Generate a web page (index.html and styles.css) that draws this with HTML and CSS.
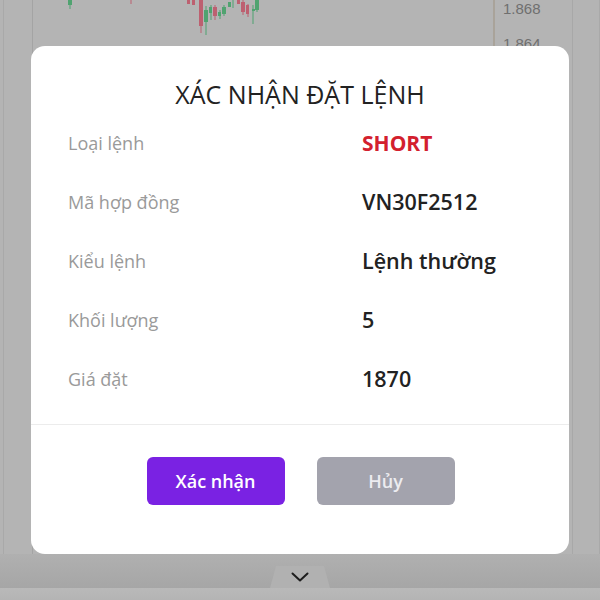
FILE: index.html
```html
<!DOCTYPE html>
<html lang="vi">
<head>
    <meta charset="UTF-8">
    <title>Xác nhận đặt lệnh</title>
    <link rel="stylesheet" href="styles.css">
</head>
<body>
    <div class="screen">
        <div class="chart">
            <div class="plot">
                <svg class="candles" width="460" height="50" viewBox="0 0 460 50">
                    <line x1="37" y1="0" x2="37" y2="9" stroke="#2f9e5a" stroke-width="1"/>
                    <rect x="35" y="0" width="4" height="5" fill="#2f9e5a"/>
                    <line x1="98" y1="0" x2="98" y2="4" stroke="#c0455a" stroke-width="1"/>
                    <rect x="154" y="0" width="3" height="4" fill="#c0455a"/>
                    <rect x="159" y="0" width="3" height="5" fill="#c0455a"/>
                    <line x1="168" y1="0" x2="168" y2="33" stroke="#c0455a" stroke-width="1"/>
                    <rect x="166" y="0" width="4" height="26" fill="#c0455a"/>
                    <line x1="173" y1="6" x2="173" y2="35" stroke="#2f9e5a" stroke-width="1"/>
                    <rect x="171" y="10" width="4" height="12" fill="#2f9e5a"/>
                    <line x1="178" y1="5" x2="178" y2="20" stroke="#2f9e5a" stroke-width="1"/>
                    <rect x="176" y="7" width="3" height="6" fill="#2f9e5a"/>
                    <line x1="182" y1="5" x2="182" y2="20" stroke="#c0455a" stroke-width="1"/>
                    <rect x="180" y="7" width="4" height="9" fill="#c0455a"/>
                    <line x1="187" y1="10" x2="187" y2="19" stroke="#2f9e5a" stroke-width="1"/>
                    <rect x="185" y="12" width="3" height="4" fill="#2f9e5a"/>
                    <line x1="191" y1="5" x2="191" y2="16" stroke="#2f9e5a" stroke-width="1"/>
                    <rect x="189" y="7" width="4" height="7" fill="#2f9e5a"/>
                    <rect x="195" y="2" width="3" height="5" fill="#2f9e5a"/>
                    <line x1="200" y1="0" x2="200" y2="8" stroke="#2f9e5a" stroke-width="1"/>
                    <rect x="204" y="0" width="3" height="4" fill="#c0455a"/>
                    <line x1="210" y1="0" x2="210" y2="15" stroke="#c0455a" stroke-width="1"/>
                    <rect x="208" y="2" width="4" height="10" fill="#c0455a"/>
                    <line x1="215" y1="4" x2="215" y2="17" stroke="#c0455a" stroke-width="1"/>
                    <rect x="213" y="5" width="3" height="9" fill="#c0455a"/>
                    <line x1="220" y1="5" x2="220" y2="24" stroke="#2f9e5a" stroke-width="1"/>
                    <rect x="219" y="9" width="3" height="2" fill="#2f9e5a"/>
                    <line x1="224" y1="0" x2="224" y2="12" stroke="#2f9e5a" stroke-width="1"/>
                    <rect x="222" y="0" width="4" height="10" fill="#2f9e5a"/>
                </svg>
            </div>
            <div class="axis">
                <span>1.868</span>
                <span>1.864</span>
            </div>
            <div class="edge"></div>
        </div>

        <div class="modal">
            <h2 class="modal-title">XÁC NHẬN ĐẶT LỆNH</h2>
            <div class="rows">
                <div class="row">
                    <span class="label">Loại lệnh</span>
                    <span class="value short">SHORT</span>
                </div>
                <div class="row">
                    <span class="label">Mã hợp đồng</span>
                    <span class="value">VN30F2512</span>
                </div>
                <div class="row">
                    <span class="label">Kiểu lệnh</span>
                    <span class="value">Lệnh thường</span>
                </div>
                <div class="row">
                    <span class="label">Khối lượng</span>
                    <span class="value">5</span>
                </div>
                <div class="row">
                    <span class="label">Giá đặt</span>
                    <span class="value">1870</span>
                </div>
            </div>
            <div class="modal-footer">
                <button class="btn btn-confirm">Xác nhận</button>
                <button class="btn btn-cancel">Hủy</button>
            </div>
        </div>

        <div class="bottom">
            <div class="tab">
                <svg width="18" height="10" viewBox="0 0 18 10">
                    <path d="M1.5 1.5 L9 8.5 L16.5 1.5" fill="none" stroke="#1e1e1e" stroke-width="2" stroke-linecap="round" stroke-linejoin="round"/>
                </svg>
            </div>
        </div>
    </div>
</body>
</html>
```

FILE: styles.css
```css
body {
    margin: 0;
    font-family: "Open Sans", "Noto Sans", sans-serif;
    background-color: #b4b4b4;
}
.screen {
    position: relative;
    width: 600px;
    height: 600px;
    overflow: hidden;
    background-color: #b4b4b4;
}
.chart {
    display: flex;
    height: 600px;
    border-left: 1px solid #a9a9a9;
    margin-left: 3px;
}
.plot {
    width: 460px;
    margin-left: 28px;
    border-left: 1px solid #a4a4a4;
    border-right: 2px solid #a9a39a;
}
.candles {
    display: block;
    opacity: 0.75;
}
.axis {
    width: 73px;
    display: flex;
    flex-direction: column;
    padding-left: 8px;
    padding-top: 1px;
    font-family: "Liberation Sans", Arial, sans-serif;
    font-size: 15px;
    color: #6f6f6f;
    border-right: 1px solid #a8a8a8;
}
.axis span {
    height: 35px;
    line-height: 15px;
}
.edge {
    width: 28px;
    border-right: 1px solid #a9a9a9;
}

/* modal overlay */
.modal {
    position: absolute;
    left: 31px;
    top: 46px;
    width: 538px;
    height: 508px;
    box-sizing: border-box;
    background-color: #fff;
    border-radius: 14px;
    padding-top: 31px;
}
.modal-title {
    margin: 0 0 1px;
    height: 35px;
    line-height: 35px;
    text-align: center;
    font-size: 25px;
    font-weight: 400;
    color: #222;
}
.rows {
    padding: 0 20px 16px 37px;
}
.row {
    display: grid;
    grid-template-columns: 294px 1fr;
    align-items: center;
    height: 59px;
}
.label {
    font-size: 18px;
    color: #9a9a9a;
}
.value {
    font-size: 21.5px;
    font-weight: 600;
    color: #222;
}
.value.short {
    font-size: 21px;
    color: #d3202e;
    font-weight: 700;
}
.modal-footer {
    display: flex;
    justify-content: center;
    gap: 32px;
    border-top: 1px solid #ececec;
    padding-top: 32px;
    padding-left: 1px;
}
.btn {
    width: 138px;
    height: 48px;
    border: none;
    border-radius: 6px;
    font-family: "Open Sans", "Noto Sans", sans-serif;
    font-size: 18px;
    font-weight: 600;
    cursor: pointer;
}
.btn-confirm {
    background-color: #7a22e3;
    color: #fff;
}
.btn-cancel {
    background-color: #a3a3ad;
    color: #ececf0;
}

/* bottom handle */
.bottom {
    position: absolute;
    left: 0;
    right: 0;
    top: 554px;
    height: 46px;
    background: linear-gradient(#b0b0b0, #a6a6a6 34px, #b9b9b9 34px, #b4b4b4);
}
.tab {
    position: absolute;
    left: 270px;
    top: 12px;
    width: 60px;
    height: 22px;
    background-color: #b1b1b1;
    clip-path: polygon(10% 0, 90% 0, 100% 100%, 0 100%);
    display: flex;
    justify-content: center;
    align-items: center;
}
```
